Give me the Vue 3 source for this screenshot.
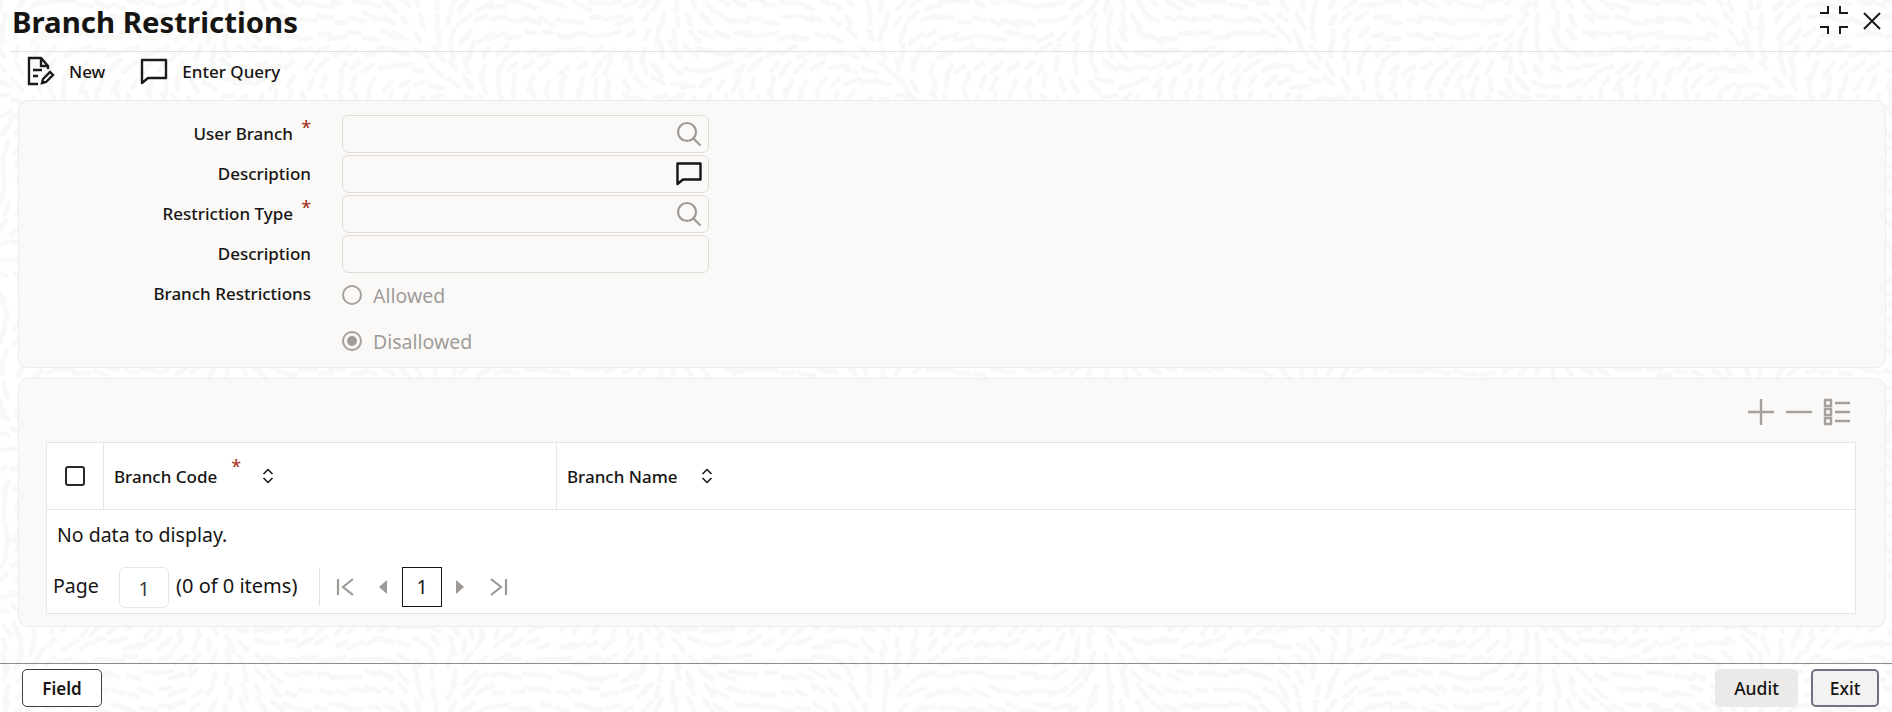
<template>
  <div class="page">
    <svg class="texture" width="1892" height="712" aria-hidden="true">
      <line
        v-for="(s, i) in strokes"
        :key="i"
        :x1="s.x1"
        :y1="s.y1"
        :x2="s.x2"
        :y2="s.y2"
      />
    </svg>

    <header class="title-bar">
      <h1>Branch Restrictions</h1>
      <div class="window-actions">
        <svg width="30" height="30" viewBox="0 0 30 30" fill="none" stroke="#1c1a18" stroke-width="2">
          <path d="M9 1v7H1M21 1v7h8M9 29v-7H1M21 29v-7h8" />
        </svg>
        <svg width="20" height="20" viewBox="0 0 20 20" fill="none" stroke="#1c1a18" stroke-width="2">
          <path d="M2 2l16 16M18 2L2 18" />
        </svg>
      </div>
    </header>

    <nav class="toolbar">
      <button type="button" class="tool">
        <svg width="30" height="30" viewBox="0 0 30 30" fill="none" stroke="#1c1a18" stroke-width="2.4">
          <path d="M13 28H4V2h12l7 8v3" />
          <path d="M16 2v8h7" />
          <path d="M8 14h9M8 20h5" />
          <path d="M17 27l1-4 7-7 3 3-7 7z" />
        </svg>
        <span>New</span>
      </button>
      <button type="button" class="tool">
        <svg width="28" height="28" viewBox="0 0 28 28" fill="none" stroke="#1c1a18" stroke-width="2.4">
          <path d="M2 3h24v18H8l-6 5z" stroke-linejoin="round" />
        </svg>
        <span>Enter Query</span>
      </button>
    </nav>

    <section class="panel form-panel">
      <div class="field">
        <label>User Branch<i class="req">*</i></label>
        <div class="input">
          <svg class="icon" width="26" height="26" viewBox="0 0 26 26" fill="none" stroke="#9e9a96" stroke-width="2.2">
            <circle cx="11" cy="11" r="9" />
            <path d="M17.500 17.500l7 7" />
          </svg>
        </div>
      </div>
      <div class="field">
        <label>Description</label>
        <div class="input">
          <svg class="icon" width="26" height="24" viewBox="0 0 26 24" fill="none" stroke="#161513" stroke-width="2.4">
            <path d="M1.500 1.500h23v16H7l-5.500 4.500z" stroke-linejoin="round" />
          </svg>
        </div>
      </div>
      <div class="field">
        <label>Restriction Type<i class="req">*</i></label>
        <div class="input">
          <svg class="icon" width="26" height="26" viewBox="0 0 26 26" fill="none" stroke="#9e9a96" stroke-width="2.2">
            <circle cx="11" cy="11" r="9" />
            <path d="M17.500 17.500l7 7" />
          </svg>
        </div>
      </div>
      <div class="field">
        <label>Description</label>
        <div class="input"></div>
      </div>
      <div class="radio-group">
        <div class="group-label">Branch Restrictions</div>
        <div class="radios">
          <div class="radio"><span class="dot"></span>Allowed</div>
          <div class="radio"><span class="dot on"></span>Disallowed</div>
        </div>
      </div>
    </section>

    <section class="panel grid-panel">
      <div class="grid-tools">
        <svg width="28" height="28" viewBox="0 0 28 28" stroke="#a5a19d" stroke-width="2.4" fill="none">
          <path d="M1 14h26M14 1v26" />
        </svg>
        <svg width="28" height="28" viewBox="0 0 28 28" stroke="#a5a19d" stroke-width="2.4" fill="none">
          <path d="M1 14h26" />
        </svg>
        <svg width="28" height="28" viewBox="0 0 28 28" stroke="#a5a19d" stroke-width="2.4" fill="none">
          <path d="M2 2h6v6H2zM2 11h6v6H2zM2 20h6v6H2zM12 5h15M12 14h15M12 23h15" />
        </svg>
      </div>
      <div class="table">
        <div class="thead">
          <div class="cell-check"><span class="checkbox"></span></div>
          <div class="th code">
            <span>Branch Code</span>
            <i class="req">*</i>
            <svg class="sort" width="12" height="16" viewBox="0 0 12 16" fill="none" stroke="#161513" stroke-width="1.5">
              <path d="M1.500 6L6 1.500 10.500 6M1.500 10L6 14.500 10.500 10" />
            </svg>
          </div>
          <div class="th name">
            <span>Branch Name</span>
            <svg class="sort" width="12" height="16" viewBox="0 0 12 16" fill="none" stroke="#161513" stroke-width="1.5">
              <path d="M1.500 6L6 1.500 10.500 6M1.500 10L6 14.500 10.500 10" />
            </svg>
          </div>
        </div>
        <div class="empty">No data to display.</div>
        <div class="pager">
          <span class="page-label">Page</span>
          <span class="page-input">1</span>
          <span class="count">(0 of 0 items)</span>
          <span class="sep"></span>
          <svg class="nav first" width="20" height="20" viewBox="0 0 20 20" fill="none" stroke="#9e9a96" stroke-width="2.200">
            <path d="M2 2v16M17 2L7 10l10 8" />
          </svg>
          <svg class="nav prev" width="8" height="14" viewBox="0 0 8 14" fill="#9e9a96">
            <path d="M8 0v14L0 7z" />
          </svg>
          <span class="current">1</span>
          <svg class="nav next" width="8" height="14" viewBox="0 0 8 14" fill="#9e9a96">
            <path d="M0 0v14l8-7z" />
          </svg>
          <svg class="nav last" width="20" height="20" viewBox="0 0 20 20" fill="none" stroke="#9e9a96" stroke-width="2.200">
            <path d="M18 2v16M3 2l10 8-10 8" />
          </svg>
        </div>
      </div>
    </section>

    <footer class="footer">
      <button type="button" class="btn field-btn">Field</button>
      <div class="footer-right">
        <button type="button" class="btn audit">Audit</button>
        <button type="button" class="btn exit">Exit</button>
      </div>
    </footer>
  </div>
</template>

<script setup>
// faint rice-grain background, seeded so it renders the same every time
let seed = 7
const rnd = () => {
  seed = (seed * 16807) % 2147483647
  return seed / 2147483647
}

const strokes = []
for (let y = 0; y < 712; y += 16) {
  for (let x = 0; x < 1892; x += 16) {
    const cx = x + rnd() * 7
    const cy = y + rnd() * 7
    const a = Math.sin(x / 70) * 1.7 + Math.cos(y / 55) * 1.7 + rnd() * 0.3
    const len = 4 + rnd() * 5
    strokes.push({
      x1: +(cx - Math.cos(a) * len).toFixed(1),
      y1: +(cy - Math.sin(a) * len).toFixed(1),
      x2: +(cx + Math.cos(a) * len).toFixed(1),
      y2: +(cy + Math.sin(a) * len).toFixed(1),
    })
  }
}
</script>

<style>
html,
body {
  margin: 0;
  background: #fff;
}
</style>

<style scoped>
.page {
  position: relative;
  width: 1892px;
  height: 712px;
  overflow: hidden;
  font-family: "Noto Sans", "Open Sans", sans-serif;
  font-size: 19.5px;
  color: #161513;
  background: #fff;
}

.texture {
  position: absolute;
  inset: 0;
  stroke: #f8f8f7;
  stroke-width: 5;
  stroke-linecap: round;
}

.title-bar,
.toolbar,
.panel {
  position: relative;
}

.title-bar {
  display: flex;
  justify-content: space-between;
  height: 51px;
  border-bottom: 1px solid #e4e2df;
  margin-left: 10px;
  padding-left: 2px;
}

h1 {
  margin: 0;
  font-size: 29.4px;
  font-weight: 700;
  line-height: 44px;
}

.window-actions {
  display: flex;
  gap: 13px;
  padding: 5px 10px 0 0;
}

.window-actions svg:last-child {
  margin-top: 6px;
}

.toolbar {
  display: flex;
  gap: 35px;
  height: 48px;
  padding: 0 0 10px 25px;
  box-sizing: border-box;
  align-items: center;
}

.tool {
  display: flex;
  align-items: center;
  gap: 14px;
  padding: 0;
  border: 0;
  background: none;
  font: inherit;
  font-size: 17px;
  font-weight: 500;
  color: inherit;
}

.panel {
  margin: 0 6px 0 18px;
  box-sizing: border-box;
  background: #fbf9f8;
  border: 1px solid #eeece9;
  border-radius: 10px;
}

.form-panel {
  height: 268px;
  padding-top: 14px;
}

.field {
  display: flex;
  height: 40px;
}

.field label {
  position: relative;
  box-sizing: border-box;
  width: 323px;
  padding: 7px 31px 0 0;
  text-align: right;
  font-size: 17px;
  font-weight: 500;
  line-height: 24px;
  white-space: nowrap;
}

.field label:has(.req) {
  padding-right: 49px;
}

.req {
  position: absolute;
  right: 31px;
  top: 0;
  font-style: normal;
  font-size: 18px;
  color: #a73a2c;
}

.input {
  display: flex;
  align-items: center;
  justify-content: flex-end;
  box-sizing: border-box;
  width: 367px;
  height: 38px;
  padding-right: 6px;
  background: #fbf9f8;
  border: 1px solid #dfdcd8;
  border-radius: 6px;
}

.radio-group {
  display: flex;
}

.group-label {
  box-sizing: border-box;
  width: 323px;
  padding: 7px 31px 0 0;
  text-align: right;
  font-size: 17px;
  font-weight: 500;
  line-height: 24px;
}

.radios {
  display: flex;
  flex-direction: column;
  gap: 22px;
  padding-top: 8px;
}

.radio {
  display: flex;
  align-items: center;
  gap: 11px;
  height: 24px;
  color: #a09c98;
}

.dot {
  display: flex;
  align-items: center;
  justify-content: center;
  box-sizing: border-box;
  width: 20px;
  height: 20px;
  border: 2px solid #a5a19d;
  border-radius: 50%;
}

.dot.on::after {
  content: "";
  width: 10px;
  height: 10px;
  border-radius: 50%;
  background: #a09c98;
}

.grid-panel {
  height: 249px;
  margin-top: 10px;
  padding: 19px 29px 0 27px;
}

.grid-tools {
  display: flex;
  justify-content: flex-end;
  gap: 10px;
  height: 44px;
  padding-right: 5px;
}

.table {
  background: #fff;
  border: 1px solid #e8e6e3;
  height: 172px;
  box-sizing: border-box;
}

.thead {
  display: flex;
  height: 67px;
  box-sizing: border-box;
  border-bottom: 1px solid #e8e6e3;
}

.cell-check {
  display: flex;
  align-items: center;
  justify-content: center;
  width: 57px;
  border-right: 1px solid #e8e6e3;
  box-sizing: border-box;
}

.checkbox {
  box-sizing: border-box;
  width: 20px;
  height: 20px;
  border: 2px solid #2b2926;
  border-radius: 3px;
}

.th {
  position: relative;
  display: flex;
  align-items: center;
  box-sizing: border-box;
  padding-left: 10px;
  font-size: 17px;
  font-weight: 500;
}

.th.code {
  width: 453px;
  border-right: 1px solid #e8e6e3;
}

.th.code .sort {
  margin-left: 37px;
}

.th.name .sort {
  margin-left: 23px;
}

.th .req {
  position: relative;
  right: auto;
  top: -10px;
  margin-left: 14px;
  margin-right: -16px;
}

.empty {
  padding: 13px 10px 0;
  line-height: 24px;
}

.pager {
  display: flex;
  align-items: center;
  margin-top: 20px;
  padding-left: 6px;
  height: 40px;
}

.page-label {
  width: 66px;
  padding-bottom: 3px;
}

.page-input {
  box-sizing: border-box;
  width: 50px;
  height: 41px;
  border: 1px solid #e8e6e3;
  border-radius: 6px;
  text-align: center;
  line-height: 42px;
  color: #3a3835;
}

.count {
  margin-left: 7px;
  width: 122px;
  padding-bottom: 3px;
  font-size: 20px;
  white-space: nowrap;
}

.sep {
  width: 1px;
  height: 38px;
  background: #e4e2df;
  margin: 0 16px 0 21px;
}

.nav.first {
  margin-right: 23px;
}

.nav.prev {
  margin-right: 15px;
}

.current {
  box-sizing: border-box;
  width: 40px;
  height: 40px;
  border: 1px solid #161513;
  text-align: center;
  line-height: 38px;
}

.nav.next {
  margin: 0 24px 0 14px;
}

.footer {
  position: absolute;
  left: 0;
  right: 0;
  top: 663px;
  display: flex;
  justify-content: space-between;
  padding: 5px 13px 0 22px;
  border-top: 1px solid #8f8c88;
}

.footer-right {
  display: flex;
  gap: 13px;
}

.btn {
  box-sizing: border-box;
  height: 38px;
  padding: 0;
  font: inherit;
  font-size: 17.5px;
  font-weight: 500;
  color: #161513;
  border-radius: 5px;
  background: transparent;
}

.field-btn {
  width: 80px;
  border: 1px solid #403e3b;
  background: #fff;
  font-weight: 600;
  font-size: 17px;
}

.audit {
  width: 83px;
  border: 1px solid #eceae8;
  background: #eceae8;
}

.exit {
  width: 68px;
  border: 2px solid #6f7183;
  background: #f3f2f1;
}
</style>
